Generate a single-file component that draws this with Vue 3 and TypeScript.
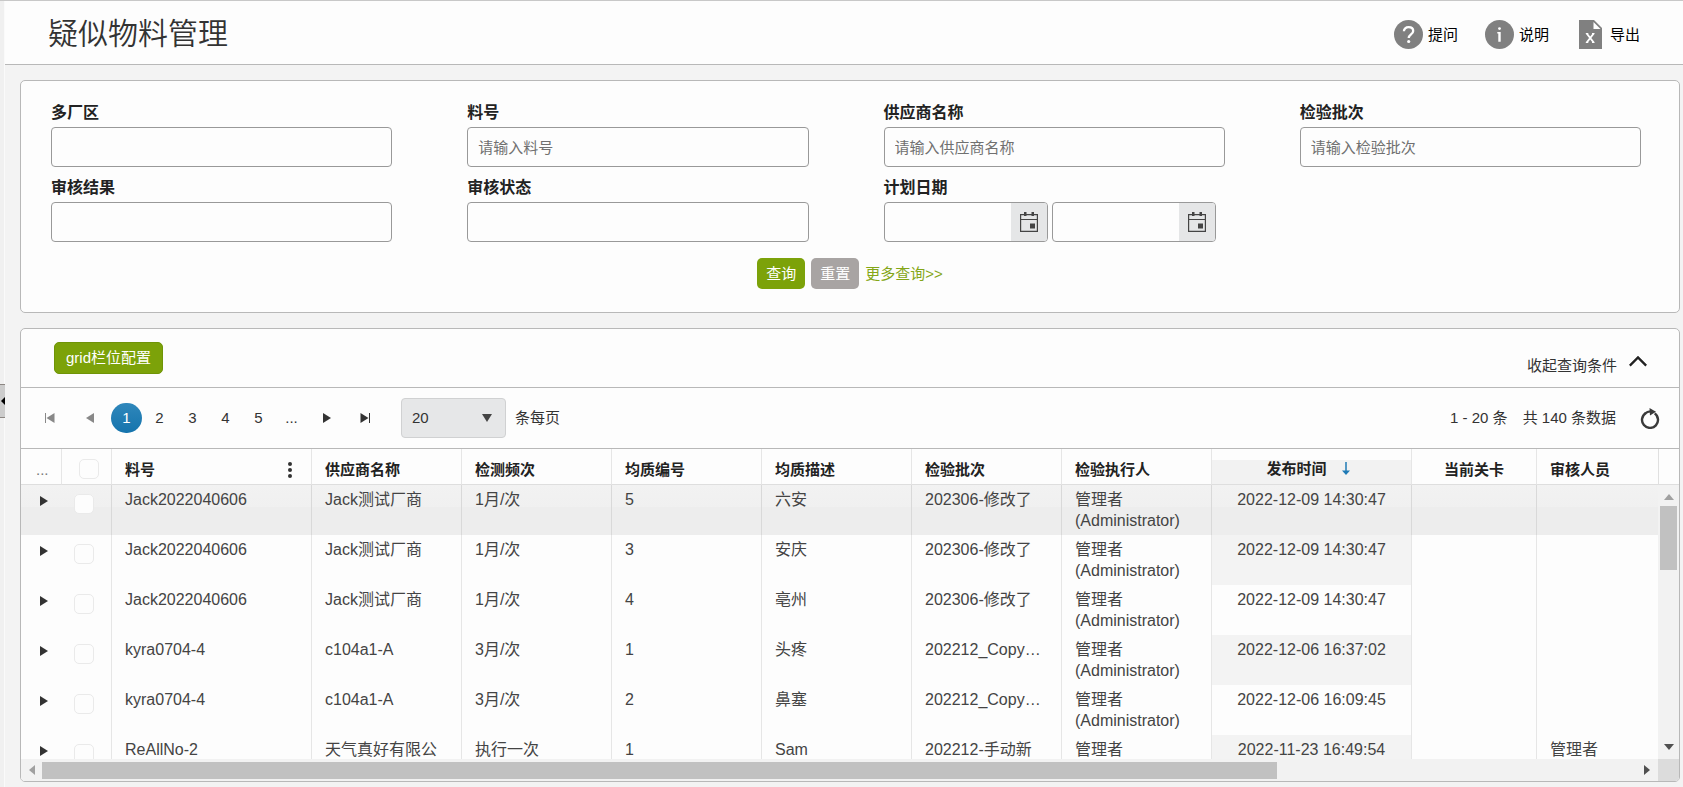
<script setup lang="ts">
import { ref } from 'vue'

interface Field {
  id: string
  label: string
  placeholder: string
}

interface Row {
  part: string
  vendor: string
  frequency: string
  code: string
  material: string
  batch: string
  inspector: string
  published: string
  stage: string
  reviewer: string
}

const fields: Field[] = [
  { id: 'plant', label: '多厂区', placeholder: '' },
  { id: 'part', label: '料号', placeholder: '请输入料号' },
  { id: 'vendor', label: '供应商名称', placeholder: '请输入供应商名称' },
  { id: 'batch', label: '检验批次', placeholder: '请输入检验批次' },
  { id: 'result', label: '审核结果', placeholder: '' },
  { id: 'status', label: '审核状态', placeholder: '' },
]

const admin = '管理者 (Administrator)'

const rows: Row[] = [
  { part: 'Jack2022040606', vendor: 'Jack测试厂商', frequency: '1月/次', code: '5', material: '六安', batch: '202306-修改了', inspector: admin, published: '2022-12-09 14:30:47', stage: '', reviewer: '' },
  { part: 'Jack2022040606', vendor: 'Jack测试厂商', frequency: '1月/次', code: '3', material: '安庆', batch: '202306-修改了', inspector: admin, published: '2022-12-09 14:30:47', stage: '', reviewer: '' },
  { part: 'Jack2022040606', vendor: 'Jack测试厂商', frequency: '1月/次', code: '4', material: '亳州', batch: '202306-修改了', inspector: admin, published: '2022-12-09 14:30:47', stage: '', reviewer: '' },
  { part: 'kyra0704-4', vendor: 'c104a1-A', frequency: '3月/次', code: '1', material: '头疼', batch: '202212_Copy…', inspector: admin, published: '2022-12-06 16:37:02', stage: '', reviewer: '' },
  { part: 'kyra0704-4', vendor: 'c104a1-A', frequency: '3月/次', code: '2', material: '鼻塞', batch: '202212_Copy…', inspector: admin, published: '2022-12-06 16:09:45', stage: '', reviewer: '' },
  { part: 'ReAllNo-2', vendor: '天气真好有限公', frequency: '执行一次', code: '1', material: 'Sam', batch: '202212-手动新', inspector: '管理者', published: '2022-11-23 16:49:54', stage: '', reviewer: '管理者' },
]

const pages = ['1', '2', '3', '4', '5', '...']
const currentPage = ref('1')
const pageSize = ref('20')
</script>

<template>
  <div class="app">
    <aside class="rail">
      <button class="rail-handle" type="button" aria-label="展开菜单">
        <svg width="4" height="8" viewBox="0 0 4 8"><path d="M4 0v8L0 4z" fill="#000" /></svg>
      </button>
    </aside>

    <div class="main">
      <header class="topbar">
        <h1>疑似物料管理</h1>
        <nav class="actions">
          <button type="button" class="action">
            <svg width="29" height="29" viewBox="0 0 29 29">
              <circle cx="14.500" cy="14.500" r="14.500" fill="#808080" />
              <path d="M9.900 11.300c0-2.500 1.900-4.100 4.700-4.100s4.600 1.600 4.600 3.900c0 3.300-4.500 3.400-4.500 7" fill="none" stroke="#fff" stroke-width="2.300" />
              <circle cx="14.700" cy="21.500" r="1.600" fill="#fff" />
            </svg>
            <span>提问</span>
          </button>
          <button type="button" class="action">
            <svg width="29" height="29" viewBox="0 0 29 29">
              <circle cx="14.500" cy="14.500" r="14.500" fill="#808080" />
              <circle cx="14.500" cy="8.600" r="1.400" fill="#fff" />
              <path d="M12.300 12h3.400v9.800h-2.400V13.400h-1z" fill="#fff" />
            </svg>
            <span>说明</span>
          </button>
          <button type="button" class="action">
            <svg width="29" height="29" viewBox="0 0 29 29">
              <path d="M3 0h15l8 8v21H3z" fill="#808080" />
              <path d="M17.500 2v7h7z" fill="#fff" />
              <path d="M10.700 13.500l7 9M17.700 13.500l-7 9" stroke="#fff" stroke-width="1.900" />
              <path d="M9.800 13.500h2.500M16 13.500h2.500M9.800 22.500h2.500M16 22.500h2.500" stroke="#fff" />
            </svg>
            <span>导出</span>
          </button>
        </nav>
      </header>

      <form class="panel search" @submit.prevent>
        <div class="fields">
          <div v-for="f in fields" :key="f.id" class="field">
            <label :for="f.id">{{ f.label }}</label>
            <input :id="f.id" type="text" :placeholder="f.placeholder" />
          </div>
          <div class="field">
            <label for="date-0">计划日期</label>
            <div class="dates">
              <div v-for="n in 2" :key="n" class="date">
                <input :id="`date-${n - 1}`" type="text" aria-label="计划日期" />
                <button type="button" aria-label="选择日期">
                  <svg width="18" height="20" viewBox="0 0 18 20">
                    <path d="M.600 2.600h16.800v16.800H.600zM.600 7.500h16.800" fill="none" stroke="#444" stroke-width="1.200" />
                    <path d="M4 0h2.500v4H4zM11.500 0H14v4h-2.500zM10 11.500h5v5h-5z" fill="#444" />
                  </svg>
                </button>
              </div>
            </div>
          </div>
        </div>
        <div class="search-actions">
          <button type="submit" class="btn">查询</button>
          <button type="reset" class="btn btn-grey">重置</button>
          <a href="#">更多查询&gt;&gt;</a>
        </div>
      </form>

      <section class="panel results">
        <div class="toolbar">
          <button type="button" class="btn btn-config">grid栏位配置</button>
          <button type="button" class="collapse">
            <span>收起查询条件</span>
            <svg width="18" height="20" viewBox="0 0 18 20"><path d="M.800 11.600L9 3.400l8.200 8.200" fill="none" stroke="#222" stroke-width="2.400" /></svg>
          </button>
        </div>

        <div class="pager">
          <button type="button" class="nav dim" aria-label="首页">
            <svg width="10" height="10" viewBox="0 0 10 10"><path d="M.500 0v10" stroke="#888" /><path d="M9.500 0v10L1.500 5z" fill="#888" /></svg>
          </button>
          <button type="button" class="nav dim" aria-label="上一页">
            <svg width="8" height="10" viewBox="0 0 8 10"><path d="M8 0v10L0 5z" fill="#888" /></svg>
          </button>
          <button
            v-for="p in pages"
            :key="p"
            type="button"
            class="page"
            :class="{ active: p === currentPage }"
            @click="currentPage = p"
          ><span>{{ p }}</span></button>
          <button type="button" class="nav" aria-label="下一页">
            <svg width="8" height="10" viewBox="0 0 8 10"><path d="M0 0v10l8-5z" fill="#333" /></svg>
          </button>
          <button type="button" class="nav" aria-label="末页">
            <svg width="10" height="10" viewBox="0 0 10 10"><path d="M9.500 0v10" stroke="#333" /><path d="M.500 0v10l8-5z" fill="#333" /></svg>
          </button>
          <div class="size">
            <select id="page-size" v-model="pageSize">
              <option>20</option>
              <option>50</option>
            </select>
            <svg width="10" height="8" viewBox="0 0 10 8"><path d="M0 0h10L5 8z" fill="#444" /></svg>
          </div>
          <label for="page-size">条每页</label>
          <div class="summary">
            <span>1 - 20 条</span>
            <span>共 140 条数据</span>
          </div>
          <button type="button" class="refresh" aria-label="刷新">
            <svg width="20" height="21" viewBox="0 0 20 21">
              <path d="M5.600 5.200A8 8 0 1 0 14.700 5.400" fill="none" stroke="#3a3a3a" stroke-width="2.400" />
              <path d="M5 5.600Q7.500 3.300 10.500 3.400" fill="none" stroke="#3a3a3a" stroke-width="2.400" />
              <path d="M9.500 0l6.500 3.800-6 3.700z" fill="#3a3a3a" />
            </svg>
          </button>
        </div>

        <div class="grid">
          <div class="grid-main">
            <div class="table-clip">
              <table>
                <colgroup>
                  <col class="w-expand" />
                  <col class="w-check" />
                  <col class="w-wide" />
                  <col v-for="n in 6" :key="n" class="w-mid" />
                  <col class="w-wide" />
                  <col class="w-stage" />
                  <col />
                </colgroup>
                <thead>
                  <tr>
                    <th class="expand">...</th>
                    <th class="check"><input type="checkbox" aria-label="全选" /></th>
                    <th>
                      <div class="with-menu">
                        料号
                        <svg width="4" height="16" viewBox="0 0 4 16"><g fill="#333"><circle cx="2" cy="2" r="2" /><circle cx="2" cy="8" r="2" /><circle cx="2" cy="14" r="2" /></g></svg>
                      </div>
                    </th>
                    <th>供应商名称</th>
                    <th>检测频次</th>
                    <th>均质编号</th>
                    <th>均质描述</th>
                    <th>检验批次</th>
                    <th>检验执行人</th>
                    <th class="sorted">
                      <div class="sort-label">
                        发布时间
                        <svg width="10" height="14" viewBox="0 0 10 14"><path d="M5 0v10" stroke="#1f7ab5" stroke-width="1.500" /><path d="M1 8.500h8L5 13z" fill="#1f7ab5" /></svg>
                      </div>
                    </th>
                    <th class="center">当前关卡</th>
                    <th>审核人员</th>
                  </tr>
                </thead>
                <tbody>
                  <tr v-for="(r, i) in rows" :key="i" :class="{ hovered: i === 0 }">
                    <td class="expand">
                      <button type="button" aria-label="展开">
                        <svg width="8" height="10" viewBox="0 0 8 10"><path d="M0 0v10l8-5z" fill="#333" /></svg>
                      </button>
                    </td>
                    <td class="check"><input type="checkbox" aria-label="选择行" /></td>
                    <td>{{ r.part }}</td>
                    <td>{{ r.vendor }}</td>
                    <td>{{ r.frequency }}</td>
                    <td>{{ r.code }}</td>
                    <td>{{ r.material }}</td>
                    <td>{{ r.batch }}</td>
                    <td>{{ r.inspector }}</td>
                    <td class="center time">{{ r.published }}</td>
                    <td>{{ r.stage }}</td>
                    <td>{{ r.reviewer }}</td>
                  </tr>
                </tbody>
              </table>
            </div>
            <div class="vscroll">
              <div class="vscroll-head"></div>
              <div class="vscroll-track">
                <svg width="10" height="6" viewBox="0 0 10 6"><path d="M0 6h10L5 0z" fill="#a0a0a0" /></svg>
                <div class="vthumb"></div>
                <svg class="down" width="10" height="6" viewBox="0 0 10 6"><path d="M0 0h10L5 6z" fill="#505050" /></svg>
              </div>
            </div>
          </div>
          <div class="hscroll">
            <svg width="6" height="10" viewBox="0 0 6 10"><path d="M6 0v10L0 5z" fill="#a0a0a0" /></svg>
            <div class="htrack"><div class="hthumb"></div></div>
            <svg width="6" height="10" viewBox="0 0 6 10"><path d="M0 0v10l6-5z" fill="#505050" /></svg>
            <div class="corner"></div>
          </div>
        </div>
      </section>
    </div>
  </div>
</template>

<style>
body {
  margin: 0;
}
</style>

<style scoped>
.app,
.app * {
  box-sizing: border-box;
}

.app {
  display: flex;
  height: 100vh;
  min-height: 640px;
  overflow: hidden;
  border-top: 1px solid #c8c8c8;
  background: #f3f3f3;
  color: #333;
  font: 15px/20px "Liberation Sans", "Noto Sans CJK SC", sans-serif;
}

button,
input,
select {
  margin: 0;
  padding: 0;
  border: 0;
  background: none;
  color: inherit;
  font: inherit;
}

svg {
  display: block;
  flex: none;
}

.rail {
  display: flex;
  flex: none;
  align-items: center;
  width: 5px;
  padding-top: 14px;
  border-right: 1px solid #fafafa;
  background: #f0f0f0;
}

.rail-handle {
  display: flex;
  flex: none;
  align-items: center;
  justify-content: flex-end;
  width: 5px;
  height: 34px;
  border-top: 1px solid #8c8682;
  border-bottom: 1px solid #8c8682;
  background: #ccc;
}

.main {
  display: flex;
  flex: 1;
  flex-direction: column;
  min-width: 0;
}

.topbar {
  display: flex;
  flex: none;
  align-items: center;
  justify-content: space-between;
  height: 64px;
  padding: 0 43px 0 43px;
  border-bottom: 1px solid #b8b8b8;
  background: #fdfdfd;
}

h1 {
  margin: 0;
  padding-top: 2px;
  font-size: 30px;
  font-weight: 350;
  line-height: 40px;
}

.actions {
  display: flex;
  gap: 27px;
  padding-top: 4px;
}

.action {
  display: flex;
  align-items: center;
  gap: 5px;
  color: #000;
}

.panel {
  margin-left: 15px;
  margin-right: 3px;
  border: 1px solid #b8b8b8;
  border-radius: 5px;
  background: #fdfdfd;
}

.search {
  flex: none;
  margin-top: 15px;
  padding: 20px 38px 23px 30px;
}

.fields {
  display: grid;
  grid-template-columns: repeat(4, minmax(0, 1fr));
  gap: 9px 75px;
}

.field {
  display: flex;
  flex-direction: column;
  gap: 2px;
}

.field label {
  color: #222;
  font-size: 16px;
  font-weight: 700;
  line-height: 24px;
}

.field > input,
.date {
  height: 40px;
  border: 1px solid #999;
  border-radius: 4px;
}

.field > input {
  width: 100%;
  padding: 0 10px;
}

input::placeholder {
  color: #707070;
  opacity: 1;
}

.dates {
  display: flex;
  gap: 4px;
}

.date {
  display: flex;
  width: 164px;
  overflow: hidden;
}

.date input {
  flex: 1;
  min-width: 0;
  padding: 0 10px;
}

.date button {
  display: flex;
  align-items: center;
  justify-content: center;
  width: 36px;
  background: #e5e6e7;
}

.search-actions {
  display: flex;
  align-items: center;
  justify-content: center;
  gap: 6px;
  margin-top: 16px;
  padding-left: 8px;
}

.search-actions a {
  color: #84a617;
  text-decoration: none;
}

.btn {
  width: 48px;
  height: 31px;
  border-radius: 5px;
  background: #7ca209;
  color: #fff;
}

.btn-grey {
  background: #a8a4a3;
}

.btn-config {
  width: auto;
  height: 32px;
  padding: 0 11px;
  border: 1px solid #6f9407;
}

.results {
  display: flex;
  flex: 1;
  flex-direction: column;
  min-height: 0;
  margin-top: 15px;
  margin-bottom: 5px;
  overflow: hidden;
}

.toolbar {
  display: flex;
  flex: none;
  align-items: center;
  justify-content: space-between;
  height: 59px;
  padding: 0 32px 0 33px;
  border-bottom: 1px solid #b8b8b8;
}

.collapse {
  display: flex;
  align-items: center;
  gap: 12px;
  padding-top: 16px;
}

.collapse svg {
  margin-bottom: 4px;
}

.pager {
  display: flex;
  flex: none;
  align-items: center;
  height: 61px;
  padding: 0 19px 0 9px;
  border-bottom: 1px solid #b8b8b8;
}

.nav {
  display: flex;
  align-items: center;
  justify-content: center;
  width: 38px;
  height: 30px;
}

.nav.dim {
  width: 40px;
}

.page {
  display: flex;
  justify-content: center;
  width: 33px;
}

.page span {
  width: 31px;
  border-radius: 15px;
  line-height: 30px;
}

.page.active span {
  background: linear-gradient(#2f87bb, #1574ad);
  color: #fff;
}

.size {
  display: grid;
  align-items: center;
  width: 105px;
  margin: 0 9px 0 17px;
}

.size select,
.size svg {
  grid-area: 1 / 1;
}

.size select {
  appearance: none;
  width: 100%;
  height: 40px;
  padding: 0 10px;
  border: 1px solid #d0d1d2;
  border-radius: 4px;
  background: #e6e7e8;
}

.size svg {
  justify-self: end;
  margin-right: 14px;
  pointer-events: none;
}

.summary {
  display: flex;
  gap: 15px;
  margin-left: auto;
  margin-right: 24px;
}

.grid {
  display: flex;
  flex: 1;
  flex-direction: column;
  min-height: 0;
}

.grid-main {
  display: flex;
  flex: 1;
  min-height: 0;
}

.table-clip {
  flex: 1;
  min-width: 0;
  overflow: hidden;
}

table {
  width: 100%;
  border-collapse: separate;
  border-spacing: 0;
  table-layout: fixed;
}

.w-expand {
  width: 40px;
}

.w-check {
  width: 50px;
}

.w-mid {
  width: 150px;
}

.w-wide {
  width: 200px;
}

.w-stage {
  width: 125px;
}

th,
td {
  border-left: 1px solid #e6e6e6;
  text-align: left;
}

th {
  height: 36px;
  padding: 6px 13px 0;
  border-bottom: 1px solid #dedede;
  color: #222;
  font-weight: 700;
}

td {
  height: 50px;
  padding: 4px 13px;
  color: #444;
  font-size: 16px;
  line-height: 21px;
  vertical-align: top;
}

th.expand {
  padding-left: 15px;
  padding-right: 0;
  border-left: 0;
  color: #777;
  font-weight: 400;
}

td.expand {
  padding: 11px 0 0 19px;
  border-left: 0;
}

td.expand button {
  display: block;
}

td.check {
  padding: 9px 0 0 13px;
  border-left: 0;
}

th.check {
  padding: 4px 0 0 17px;
}

input[type="checkbox"] {
  display: block;
  appearance: none;
  width: 20px;
  height: 20px;
  border: 1px solid #eaeaea;
  border-radius: 5px;
  background: #fdfdfd;
}

.with-menu {
  display: flex;
  align-items: center;
  justify-content: space-between;
  padding-right: 6px;
}

th.sorted {
  padding-top: 4px;
  background: linear-gradient(#fdfdfd 11px, #f2f2f2 11px);
}

.sort-label {
  display: flex;
  align-items: center;
  justify-content: center;
  gap: 14px;
  padding-right: 6px;
}

.center {
  text-align: center;
}

tr:nth-child(even) .time {
  background: #f3f3f3;
}

.hovered {
  background: linear-gradient(#f2f2f2, #f0f0f0 22px, #ededed 22px);
}

.hovered td {
  border-left-color: #d9d9d9;
}

.hovered td.expand,
.hovered td.check {
  border-left: 0;
}

.vscroll {
  display: flex;
  flex: none;
  flex-direction: column;
  width: 21px;
}

.vscroll-head {
  flex: none;
  height: 36px;
  border-left: 1px solid #e0e0e0;
  border-bottom: 1px solid #dedede;
}

.vscroll-track {
  display: flex;
  flex: 1;
  flex-direction: column;
  align-items: center;
  padding: 9px 0;
  background: #f2f2f2;
}

.vthumb {
  width: 17px;
  height: 64px;
  margin-top: 6px;
  background: #c1c1c1;
}

.down {
  margin-top: auto;
}

.hscroll {
  display: flex;
  flex: none;
  align-items: center;
  height: 22px;
  padding-left: 8px;
  background: #f2f2f2;
}

.htrack {
  flex: 1;
  margin: 0 8px 0 7px;
}

.hthumb {
  width: calc(100% * 31 / 40);
  height: 17px;
  background: #c1c1c1;
}

.corner {
  width: 21px;
  height: 22px;
  margin-left: 8px;
  background: #dcdcdc;
}
</style>
